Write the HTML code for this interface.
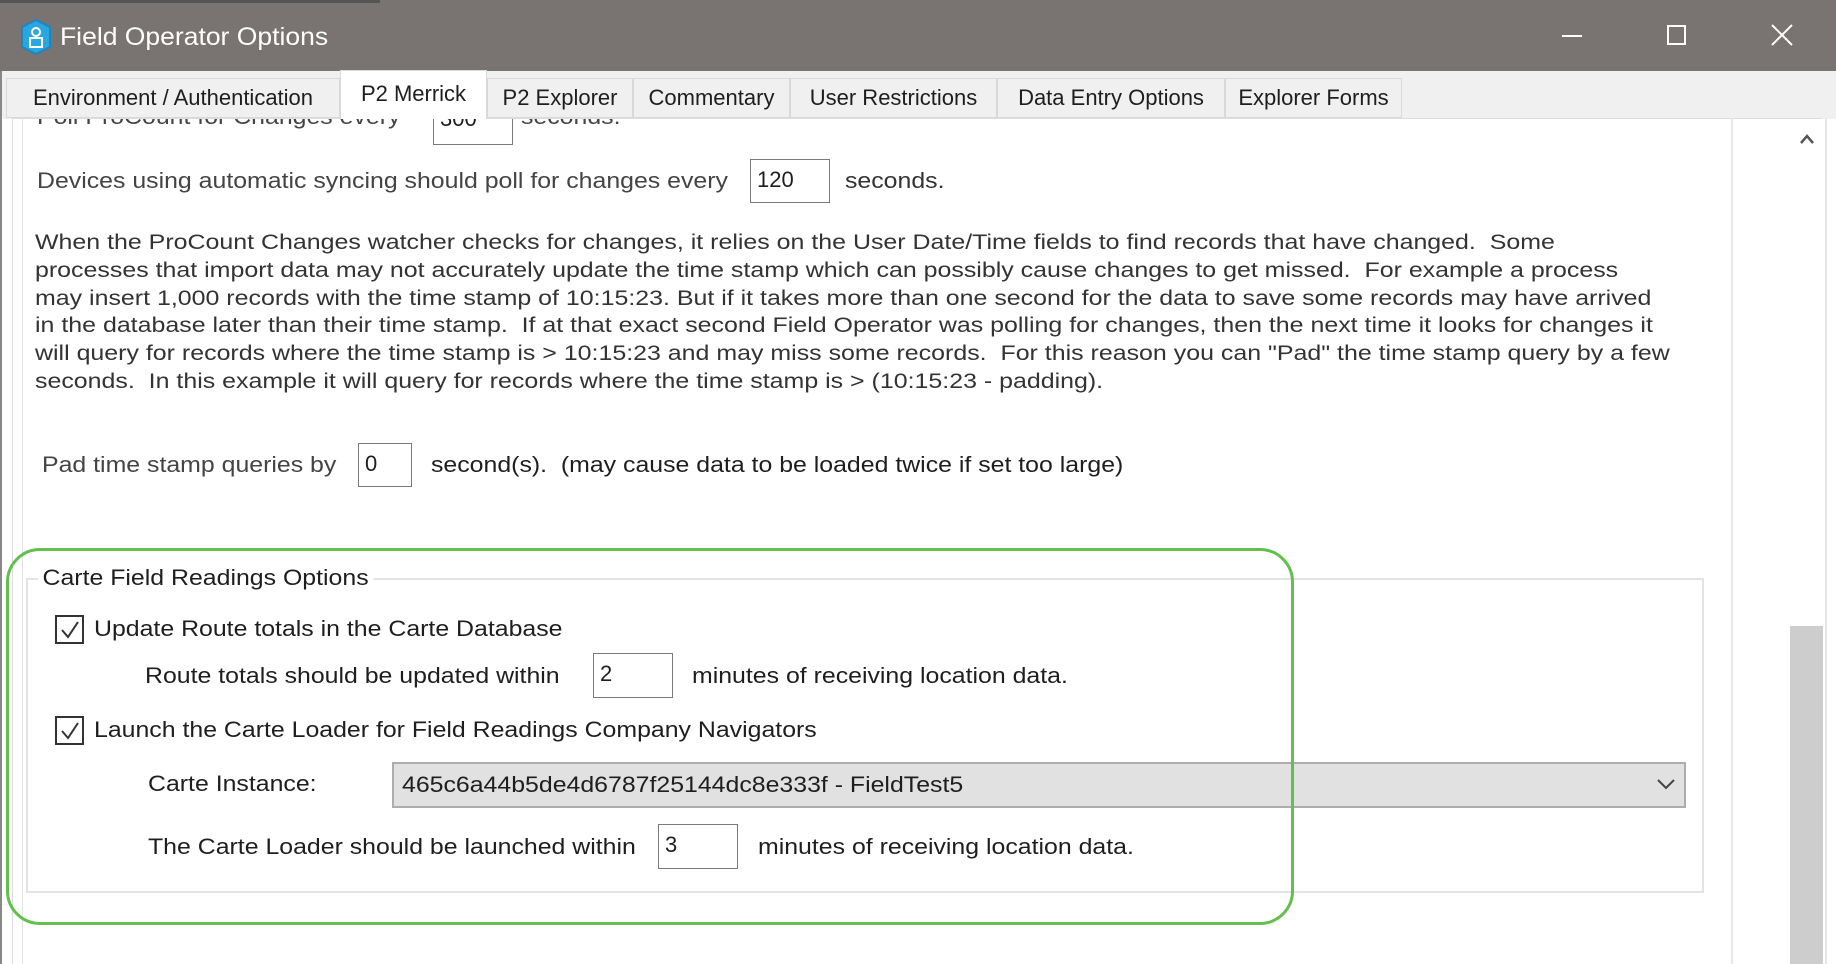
<!DOCTYPE html>
<html><head><meta charset="utf-8"><style>
*{margin:0;padding:0;box-sizing:border-box}
body{width:1836px;height:964px;overflow:hidden;background:#fff;font-family:"Liberation Sans",sans-serif;color:#1e1e1e;position:relative}
.a{position:absolute;white-space:nowrap}
.t{font-size:22px;line-height:28px;transform:scaleX(1.13);transform-origin:left center}
.box{position:absolute;border:1px solid #7a7a7a;background:#fff;font-size:22px;padding-left:6px;line-height:40px}
.tab{position:absolute;top:78px;height:40px;border:1px solid #d9d9d9;background:#f0f0f0;font-size:22px;line-height:38px;text-align:center;color:#1e1e1e}
.cb{position:absolute;width:29px;height:29px;border:2px solid #333;background:#fff}
p.l{position:absolute;left:35px;font-size:21.6px;line-height:28px;white-space:nowrap;color:#333;transform:scaleX(1.155);transform-origin:left center}
</style></head><body>
<div class="a" style="left:0;top:0;width:1836px;height:71px;background:#797372"></div>
<div class="a" style="left:0;top:0;width:380px;height:3px;background:#555"></div>
<svg class="a" style="left:18px;top:18px" width="36" height="38" viewBox="0 0 36 38"><path d="M18 2 L32 9 L32 29 L18 36 L4 29 L4 9 Z" fill="#2aa7e0" stroke="#1b86c0" stroke-width="2"/><circle cx="18" cy="14" r="4" fill="none" stroke="#fff" stroke-width="2"/><rect x="12" y="20" width="12" height="9" fill="none" stroke="#fff" stroke-width="2"/></svg>
<div class="a" style="left:60px;top:20px;font-size:25px;color:#fff;line-height:34px;transform:scaleX(1.06);transform-origin:left center">Field Operator Options</div>
<div class="a" style="left:1562px;top:35px;width:20px;height:2px;background:#fff"></div>
<div class="a" style="left:1667px;top:25px;width:19px;height:20px;border:2px solid #fff"></div>
<svg class="a" style="left:1771px;top:24px" width="22" height="22"><path d="M1 1L21 21M21 1L1 21" stroke="#fff" stroke-width="2"/></svg>
<div class="a" style="left:0;top:71px;width:1836px;height:48px;background:#f0f0f0"></div>
<div class="a" style="left:0;top:71px;width:2px;height:893px;background:#888"></div>
<div class="tab" style="left:6px;width:334px">Environment / Authentication</div>
<div class="tab" style="left:487px;width:146px">P2 Explorer</div>
<div class="tab" style="left:633px;width:157px">Commentary</div>
<div class="tab" style="left:790px;width:207px">User Restrictions</div>
<div class="tab" style="left:997px;width:228px">Data Entry Options</div>
<div class="tab" style="left:1225px;width:177px">Explorer Forms</div>
<div class="a" style="left:12px;top:118px;width:1810px;height:846px;border-left:1px solid #ddd;border-top:1px solid #ddd;background:#fff"></div>
<div class="a" style="left:340px;top:70px;width:147px;height:50px;background:#fff;border:1px solid #d9d9d9;border-bottom:none;font-size:22px;line-height:46px;text-align:center">P2 Merrick</div>
<div class="a" style="left:22px;top:118px;width:1px;height:846px;background:#e3e3e3"></div>
<div class="a" style="left:1731px;top:118px;width:2px;height:846px;background:#e6e6e6"></div>
<div class="a" style="left:1790px;top:626px;width:33px;height:338px;background:#cdcdcd"></div>
<div class="a" style="left:1825px;top:118px;width:2px;height:846px;background:#e6e6e6"></div>
<svg class="a" style="left:1799px;top:133px" width="16" height="12"><path d="M2 10L8 3L14 10" stroke="#555" stroke-width="2.5" fill="none"/></svg>
<div class="a" style="left:0;top:119px;width:1715px;height:40px;overflow:hidden">
<div class="a t" style="left:37px;top:-16px;color:#444">Poll ProCount for Changes every</div>
<div class="box" style="left:433px;top:-20px;width:80px;height:46px;line-height:38px">300</div>
<div class="a t" style="left:521px;top:-16px;color:#444">seconds.</div>
</div>
<div class="a t" style="left:37px;top:167px;color:#444">Devices using automatic syncing should poll for changes every</div>
<div class="box" style="left:750px;top:159px;width:80px;height:44px">120</div>
<div class="a t" style="left:845px;top:167px;color:#333">seconds.</div>
<p class="l" style="top:228px">When the ProCount Changes watcher checks for changes, it relies on the User Date/Time fields to find records that have changed.&nbsp; Some</p>
<p class="l" style="top:256px">processes that import data may not accurately update the time stamp which can possibly cause changes to get missed.&nbsp; For example a process</p>
<p class="l" style="top:284px">may insert 1,000 records with the time stamp of 10:15:23. But if it takes more than one second for the data to save some records may have arrived</p>
<p class="l" style="top:311px">in the database later than their time stamp.&nbsp; If at that exact second Field Operator was polling for changes, then the next time it looks for changes it</p>
<p class="l" style="top:339px">will query for records where the time stamp is &gt; 10:15:23 and may miss some records.&nbsp; For this reason you can "Pad" the time stamp query by a few</p>
<p class="l" style="top:367px">seconds.&nbsp; In this example it will query for records where the time stamp is &gt; (10:15:23 - padding).</p>
<div class="a t" style="left:42px;top:451px;color:#444">Pad time stamp queries by</div>
<div class="box" style="left:358px;top:443px;width:54px;height:44px">0</div>
<div class="a t" style="left:431px;top:451px">second(s).&nbsp; (may cause data to be loaded twice if set too large)</div>
<div class="a" style="left:26px;top:578px;width:1678px;height:315px;border:2px solid #e3e3e3"></div>
<div class="a t" style="left:38px;top:564px;background:#fff;padding:0 4px">Carte Field Readings Options</div>
<div class="cb" style="left:55px;top:615px"></div>
<svg class="a" style="left:59px;top:619px" width="22" height="22"><path d="M3 11L9 18L19 3" stroke="#333" stroke-width="2" fill="none"/></svg>
<div class="a t" style="left:94px;top:615px">Update Route totals in the Carte Database</div>
<div class="a t" style="left:145px;top:662px">Route totals should be updated within</div>
<div class="box" style="left:593px;top:653px;width:80px;height:45px">2</div>
<div class="a t" style="left:692px;top:662px">minutes of receiving location data.</div>
<div class="cb" style="left:55px;top:716px"></div>
<svg class="a" style="left:59px;top:720px" width="22" height="22"><path d="M3 11L9 18L19 3" stroke="#333" stroke-width="2" fill="none"/></svg>
<div class="a t" style="left:94px;top:716px">Launch the Carte Loader for Field Readings Company Navigators</div>
<div class="a t" style="left:148px;top:770px">Carte Instance:</div>
<div class="a" style="left:392px;top:762px;width:1294px;height:46px;background:#e1e1e1;border:2px solid #adadad"></div>
<div class="a t" style="left:402px;top:771px">465c6a44b5de4d6787f25144dc8e333f - FieldTest5</div>
<svg class="a" style="left:1656px;top:777px" width="20" height="14"><path d="M2 3L10 11L18 3" stroke="#444" stroke-width="2" fill="none"/></svg>
<div class="a t" style="left:148px;top:833px">The Carte Loader should be launched within</div>
<div class="box" style="left:658px;top:824px;width:80px;height:45px">3</div>
<div class="a t" style="left:758px;top:833px">minutes of receiving location data.</div>
<div class="a" style="left:6px;top:548px;width:1288px;height:377px;border:3.5px solid #62c04c;border-radius:34px"></div>
</body></html>
